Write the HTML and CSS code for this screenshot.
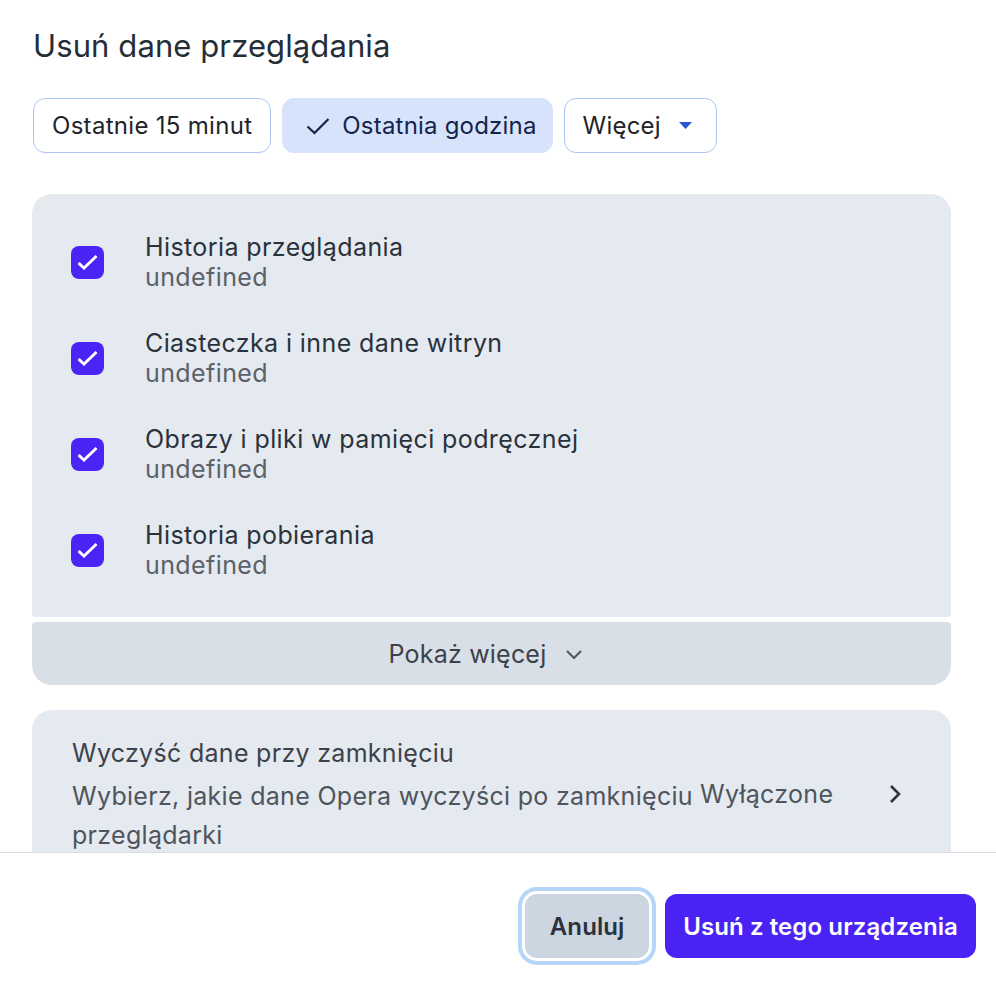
FILE: index.html
```html
<!DOCTYPE html>
<html lang="pl">

<head>
    <meta charset="UTF-8">
    <meta name="viewport" content="width=device-width, initial-scale=1.0">
    <title>Usuń dane przeglądania</title>
    <link rel="stylesheet" href="styles.css">
</head>

<body>
    <div class="dialog">
        <div class="content">
            <h1 class="title">Usuń dane przeglądania</h1>
            <div class="chips">
                <button class="chip">Ostatnie 15 minut</button>
                <button class="chip selected">
                    <svg width="24" height="24" viewBox="0 0 24 24"><path d="M1.5 12.5l7 6.5L22.5 5" fill="none" stroke="#13244a" stroke-width="2.2"/></svg>
                    Ostatnia godzina
                </button>
                <button class="chip more-chip">
                    Więcej
                    <svg class="caret" width="13" height="8" viewBox="0 0 13 8"><path d="M0 0h13L6.5 7z" fill="#2a55d0"/></svg>
                </button>
            </div>

            <div class="list">
                <div class="item">
                    <span class="check"><svg width="33" height="33" viewBox="0 0 33 33"><path d="M7.5 17l5.5 5L25.5 10" fill="none" stroke="#fff" stroke-width="3"/></svg></span>
                    <div class="label">
                        <div class="name">Historia przeglądania</div>
                        <div class="sub">undefined</div>
                    </div>
                </div>
                <div class="item">
                    <span class="check"><svg width="33" height="33" viewBox="0 0 33 33"><path d="M7.5 17l5.5 5L25.5 10" fill="none" stroke="#fff" stroke-width="3"/></svg></span>
                    <div class="label">
                        <div class="name">Ciasteczka i inne dane witryn</div>
                        <div class="sub">undefined</div>
                    </div>
                </div>
                <div class="item">
                    <span class="check"><svg width="33" height="33" viewBox="0 0 33 33"><path d="M7.5 17l5.5 5L25.5 10" fill="none" stroke="#fff" stroke-width="3"/></svg></span>
                    <div class="label">
                        <div class="name">Obrazy i pliki w pamięci podręcznej</div>
                        <div class="sub">undefined</div>
                    </div>
                </div>
                <div class="item">
                    <span class="check"><svg width="33" height="33" viewBox="0 0 33 33"><path d="M7.5 17l5.5 5L25.5 10" fill="none" stroke="#fff" stroke-width="3"/></svg></span>
                    <div class="label">
                        <div class="name">Historia pobierania</div>
                        <div class="sub">undefined</div>
                    </div>
                </div>
            </div>
            <div class="more">
                Pokaż więcej
                <svg width="18" height="18" viewBox="0 0 18 18"><path d="M2 6l7 7 7-7" fill="none" stroke="#555b62" stroke-width="2.2"/></svg>
            </div>

            <div class="card">
                <div class="card-text">
                    <div class="card-title">Wyczyść dane przy zamknięciu</div>
                    <div class="card-sub">Wybierz, jakie dane Opera wyczyści po zamknięciu przeglądarki</div>
                </div>
                <div class="card-state">Wyłączone</div>
                <svg width="16" height="22" viewBox="0 0 16 22"><path d="M4 3l8 8-8 8" fill="none" stroke="#2f353b" stroke-width="2.6"/></svg>
            </div>
        </div>

        <div class="footer">
            <button class="btn cancel">Anuluj</button>
            <button class="btn primary">Usuń z tego urządzenia</button>
        </div>
    </div>
</body>

</html>
```

FILE: styles.css
```css
* {
    box-sizing: border-box;
}

body {
    margin: 0;
    font-family: Inter, "Noto Sans", sans-serif;
    color: #2a323b;
    background: #fff;
}

button {
    font-family: inherit;
}

.dialog {
    height: 996px;
    display: flex;
    flex-direction: column;
}

.content {
    flex: 1;
    overflow: hidden;
    padding: 27px 45px 0 32px;
}

.title {
    margin: 0 0 0 1px;
    font-size: 31px;
    font-weight: 400;
    line-height: 38px;
    letter-spacing: 0.1px;
    color: #252d36;
}

.chips {
    display: flex;
    gap: 11px;
    margin: 33px 0 41px 1px;
}

.chip {
    display: flex;
    align-items: center;
    gap: 12px;
    height: 55px;
    padding: 0 18px;
    border: 1.5px solid #a9c5f2;
    border-radius: 12px;
    background: #fff;
    font-size: 24px;
    letter-spacing: 0.3px;
    color: #1f2429;
}

.chip.selected {
    border-color: #d6e3fa;
    background: #d6e3fa;
    color: #13244a;
    padding: 0 15px 0 23px;
    letter-spacing: 0.2px;
}

.more-chip {
    gap: 18px;
    padding-right: 24px;
    letter-spacing: 0.2px;
}

.list {
    background: #e5e9f0;
    border-radius: 20px 20px 4px 4px;
    padding: 20px 0 19px 39px;
}

.item {
    display: flex;
    align-items: center;
    gap: 41px;
    height: 96px;
}

.check {
    display: flex;
    width: 33px;
    height: 33px;
    border-radius: 8px;
    background: #4a24f4;
}

.name,
.sub {
    font-size: 25px;
    line-height: 30px;
    letter-spacing: 0.4px;
}

.name {
    color: #2a323b;
}

.sub {
    color: #5a6168;
}

.more {
    display: flex;
    align-items: center;
    justify-content: center;
    gap: 19px;
    margin-top: 5px;
    height: 63px;
    padding-right: 11px;
    background: #d8dfe7;
    border-radius: 4px 4px 20px 20px;
    font-size: 25px;
    letter-spacing: 0.2px;
    color: #3c4249;
}

.card {
    display: flex;
    align-items: center;
    margin-top: 25px;
    padding: 23px 48px 40px 40px;
    background: #e5e9f0;
    border-radius: 20px;
    color: #3c4249;
}

.card-text {
    width: 628px;
}

.card-title,
.card-sub,
.card-state {
    font-size: 25px;
    letter-spacing: 0.3px;
}

.card-title {
    line-height: 40px;
}

.card-sub {
    margin-top: 4px;
    line-height: 39px;
    color: #4e555c;
}

.card-state {
    flex: 1;
    color: #4e555c;
}

.footer {
    display: flex;
    justify-content: flex-end;
    align-items: center;
    gap: 16px;
    height: 144px;
    padding: 3px 20px 0 0;
    border-top: 1.5px solid #d9dcdf;
}

.btn {
    height: 64px;
    border: 0;
    border-radius: 12px;
    font-size: 24px;
    font-weight: 600;
    letter-spacing: 0.1px;
}

.cancel {
    width: 124px;
    background: #ccd6e0;
    color: #2a323b;
    box-shadow: 0 0 0 3px #fff, 0 0 0 7px #b6d6f9;
}

.primary {
    padding: 0 18px;
    background: #4a23f4;
    color: #fff;
}
```
